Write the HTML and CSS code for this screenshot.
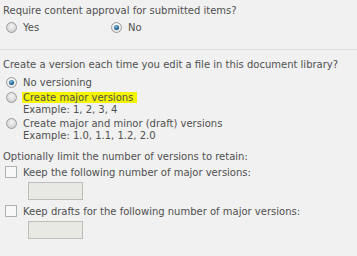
FILE: index.html
```html
<!DOCTYPE html>
<html>
<head>
<meta charset="utf-8">
<link rel="stylesheet" href="styles.css">
</head>
<body>
<div class="page">
  <div class="section first">
    <div class="question">Require content approval for submitted items?</div>
    <div class="yesno">
      <div class="opt yes"><span class="radio"></span><span class="label">Yes</span></div>
      <div class="opt"><span class="radio on"></span><span class="label">No</span></div>
    </div>
  </div>
  <div class="section second">
    <div class="question">Create a version each time you edit a file in this document library?</div>
    <div class="opt row"><span class="radio on"></span><span class="label">No versioning</span></div>
    <div class="opt row gap"><span class="radio"></span><span class="label"><span class="hl">Create major versions</span></span></div>
    <div class="example">Example: 1, 2, 3, 4</div>
    <div class="opt row"><span class="radio"></span><span class="label">Create major and minor (draft) versions</span></div>
    <div class="example">Example: 1.0, 1.1, 1.2, 2.0</div>
    <div class="question limit">Optionally limit the number of versions to retain:</div>
    <div class="opt row"><span class="check"></span><span class="label">Keep the following number of major versions:</span></div>
    <div class="field"></div>
    <div class="opt row"><span class="check"></span><span class="label">Keep drafts for the following number of major versions:</span></div>
    <div class="field"></div>
  </div>
</div>
</body>
</html>
```
FILE: styles.css
```css
html, body {
  margin: 0;
  padding: 0;
  background: #f1f1f1;
}
.page {
  width: 357px;
  height: 256px;
  overflow: hidden;
  font-family: "DejaVu Sans", Verdana, sans-serif;
  font-size: 10px;
  color: #505050;
}
.section.first {
  padding: 4px 0 0 3px;
  height: 45px;
  border-bottom: 1px solid #dddddd;
}
.section.second {
  padding: 8px 0 0 3px;
}
.question {
  line-height: 13px;
  height: 13px;
  white-space: nowrap;
}
.yesno {
  display: flex;
  margin-top: 3px;
}
.opt {
  display: flex;
  align-items: center;
  height: 14px;
  white-space: nowrap;
}
.opt.yes {
  width: 105px;
}
.second .question:first-child {
  margin-bottom: 4px;
}
.opt.row.gap {
  margin-top: 1px;
}
.radio {
  box-sizing: border-box;
  width: 11px;
  height: 11px;
  border-radius: 50%;
  border: 1px solid #9c9c9c;
  background: radial-gradient(circle at 50% 35%, #f4f4f4 0%, #dcdcdc 55%, #c4c4c4 100%);
  margin-left: 3px;
  margin-right: 6px;
  display: flex;
  align-items: center;
  justify-content: center;
}
.radio.on {
  background: radial-gradient(circle at 50% 40%, #ffffff 0%, #e6e6e6 70%, #cfcfcf 100%);
}
.radio.on::after {
  content: "";
  width: 5px;
  height: 5px;
  border-radius: 50%;
  background: radial-gradient(circle at 40% 35%, #8cc0e0 0%, #1f6699 55%, #0f3a60 100%);
}
.check {
  box-sizing: border-box;
  width: 12px;
  height: 12px;
  border: 1px solid #b0b0b0;
  background: #f8f8f8;
  margin-left: 2px;
  margin-right: 6px;
}
.hl {
  background: #f4f400;
  padding: 0 4px 0 1px;
  margin-left: -1px;
  line-height: 11px;
  display: inline-block;
}
.example {
  padding-left: 20px;
  line-height: 12px;
  height: 12px;
  white-space: nowrap;
}
.question.limit {
  margin-top: 8px;
  margin-bottom: 2px;
}
.field {
  box-sizing: border-box;
  width: 55px;
  height: 18px;
  margin: 3px 0 4px 25px;
  border: 1px solid #bdbdbd;
  background: #e9e9e4;
}
```
